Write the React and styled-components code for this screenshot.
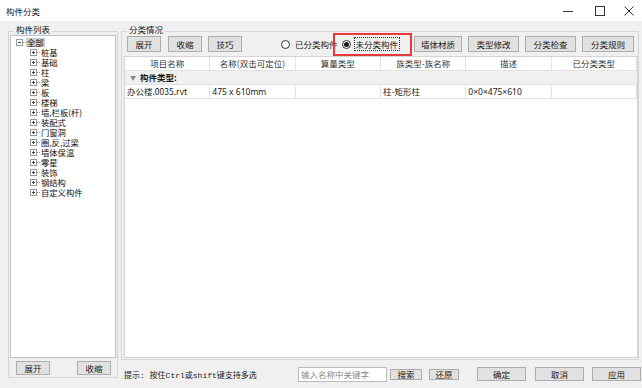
import React from 'react';
import styled, { createGlobalStyle } from 'styled-components';

const Global = createGlobalStyle`
  html, body { margin: 0; padding: 0; background: #f0f0f0; }
  body {
    font-family: "Noto Sans CJK SC", "Noto Sans", sans-serif;
    font-size: 8.5px;
    color: #1a1a1a;
  }
  * { box-sizing: border-box; }
`;

const Window = styled.div`
  width: 642px;
  height: 388px;
  display: flex;
  flex-direction: column;
  background: #f0f0f0;
  overflow: hidden;
`;

const TitleBar = styled.div`
  height: 21px;
  flex-shrink: 0;
  background: #fff;
  display: flex;
  align-items: center;
  padding-left: 6px;
`;

const Title = styled.span`
  flex: 1;
  font-size: 8.5px;
  color: #1a1a1a;
`;

const WinBtn = styled.div`
  width: ${p => p.$w}px;
  height: 21px;
  display: flex;
  align-items: center;
  justify-content: center;
`;

const Body = styled.div`
  flex: 1;
  display: flex;
  padding: 4px 0 0 8px;
  gap: 3px;
`;

const Group = styled.fieldset`
  margin: 0;
  padding: 0 1px;
  width: ${p => p.$w}px;
  height: ${p => p.$h}px;
  border: 1px solid #d6d6d6;
  display: flex;
  flex-direction: column;
  min-width: 0;
`;

const Legend = styled.legend`
  font-size: 8.5px;
  line-height: 8px;
  padding: 0 2px 4px;
  margin-left: ${p => p.$ml}px;
  color: #1a1a1a;
`;

const Tree = styled.div`
  margin-top: -2px;
  height: 323px;
  background: #fff;
  border: 1px solid #c4c4c4;
  padding-top: 1px;
  display: flex;
  flex-direction: column;
`;

const TreeRow = styled.div`
  height: 10px;
  display: flex;
  align-items: center;
  padding-left: ${p => p.$level * 14 + 5}px;
  font-size: 8.3px;
  line-height: 10px;
  color: #111;
  white-space: nowrap;
`;

const TreeLabel = styled.span`
  padding: 0 1px;
  line-height: 9px;
  background: ${p => (p.$selected ? '#cccccc' : 'transparent')};
`;

const LeftButtons = styled.div`
  margin-top: 3px;
  height: 14px;
  display: flex;
  justify-content: space-between;
  padding: 0 5px 0 6px;
`;

const Btn = styled.button`
  margin: 0 0 0 ${p => p.$ml || 0}px;
  padding: 0;
  width: ${p => p.$w}px;
  height: ${p => p.$h}px;
  flex-shrink: 0;
  border: 1px solid #adadad;
  background: #e1e1e1;
  font-family: inherit;
  font-size: 8.5px;
  line-height: 1;
  color: #1a1a1a;
  display: flex;
  align-items: center;
  justify-content: center;
`;

const RightColumn = styled.div`
  width: 521px;
  display: flex;
  flex-direction: column;
`;

const Toolbar = styled.div`
  position: relative;
  margin-top: -1px;
  height: 16px;
  display: flex;
  align-items: center;
  padding-left: 4px;
`;

const RadioLabel = styled.label`
  display: flex;
  align-items: center;
  gap: 3px;
  margin-left: ${p => p.$ml}px;
  white-space: nowrap;
`;

const RadioDot = styled.span`
  width: 9px;
  height: 9px;
  border: 1px solid #333;
  border-radius: 50%;
  background: #fff;
  display: flex;
  align-items: center;
  justify-content: center;
  &::after {
    content: '';
    width: 5px;
    height: 5px;
    border-radius: 50%;
    background: ${p => (p.$on ? '#1a1a1a' : 'transparent')};
  }
`;

const RadioText = styled.span`
  padding: 0 1px;
  line-height: 12px;
  border: 1px dotted ${p => (p.$focus ? '#333' : 'transparent')};
`;

const RedMark = styled.div`
  position: absolute;
  left: 210px;
  top: -3px;
  width: 79px;
  height: 23px;
  border: 2px solid #e8383d;
  pointer-events: none;
`;

const Table = styled.div`
  margin: 4px 0 0 1px;
  width: 514px;
  height: 302px;
  background: #fff;
  border: 1px solid #d4d4d4;
  display: flex;
  flex-direction: column;
`;

const Row = styled.div`
  height: 14px;
  display: grid;
  grid-template-columns: repeat(6, 1fr);
  border-bottom: 1px solid #e3e3e3;
  background: #fff;
`;

const Cell = styled.div`
  border-right: 1px solid #e3e3e3;
  line-height: 13px;
  padding: 0 ${p => (p.$center ? 0 : 2)}px;
  text-align: ${p => (p.$center ? 'center' : 'left')};
  white-space: nowrap;
  overflow: hidden;
  color: ${p => (p.$center ? '#333' : '#1a1a1a')};
  font-family: ${p => (p.$latin ? '"Noto Sans", "Noto Sans CJK SC", sans-serif' : 'inherit')};
`;

const GroupRow = styled.div`
  height: 14px;
  display: flex;
  align-items: center;
  gap: 4px;
  padding-left: 5px;
  background: #f0f0f0;
  border-bottom: 1px solid #e3e3e3;
  font-weight: bold;
  line-height: 13px;
`;

const Caret = styled.span`
  font-size: 6px;
  color: #888;
  font-weight: normal;
`;

const BottomBar = styled.div`
  height: 28px;
  display: flex;
  align-items: center;
  padding-left: 3px;
`;

const Hint = styled.span`
  width: 174px;
  flex-shrink: 0;
  font-family: "Liberation Mono", "Noto Sans CJK SC", monospace;
  font-size: 8px;
  white-space: nowrap;
  color: #1a1a1a;
`;

const SearchInput = styled.input`
  width: 89px;
  height: 15px;
  margin: 0;
  padding: 0 2px;
  border: 1px solid #bcbcbc;
  background: #fff;
  font-family: inherit;
  font-size: 8.5px;
  color: #1a1a1a;
  &::placeholder { color: #8a8a8a; }
`;

function Expander({ open }) {
  return (
    <svg width="10" height="9" viewBox="0 0 10 9" style={{ flexShrink: 0 }}>
      <rect x="0.5" y="1.5" width="6" height="6" fill="#fff" stroke="#9a9a9a" />
      <line x1="2" y1="4.5" x2="5" y2="4.5" stroke="#444" />
      {!open && <line x1="3.5" y1="3" x2="3.5" y2="6" stroke="#444" />}
      <line x1="7" y1="4.5" x2="10" y2="4.5" stroke="#9a9a9a" strokeDasharray="1 1" />
    </svg>
  );
}

const treeItems = ['桩基', '基础', '柱', '梁', '板', '楼梯', '墙,栏板(杆)', '装配式', '门窗洞', '圈,反,过梁', '墙体保温', '零星', '装饰', '钢结构', '自定义构件'];

const headers = ['项目名称', '名称(双击可定位)', '算量类型', '族类型-族名称', '描述', '已分类类型'];
const dataRow = ['办公楼.0035.rvt', '475 x 610mm', '', '柱-矩形柱', '0×0×475×610', ''];

export default function App() {
  return (
    <Window>
      <Global />
      <TitleBar>
        <Title>构件分类</Title>
        <WinBtn $w={32}>
          <svg width="10" height="10" viewBox="0 0 10 10"><line x1="0" y1="5.5" x2="10" y2="5.5" stroke="#333" /></svg>
        </WinBtn>
        <WinBtn $w={32}>
          <svg width="10" height="10" viewBox="0 0 10 10"><rect x="0.5" y="0.5" width="9" height="9" fill="none" stroke="#333" /></svg>
        </WinBtn>
        <WinBtn $w={26}>
          <svg width="10" height="10" viewBox="0 0 10 10"><path d="M0.5 0.5 L9.5 9.5 M9.5 0.5 L0.5 9.5" stroke="#333" /></svg>
        </WinBtn>
      </TitleBar>
      <Body>
        <Group $w={110} $h={353}>
          <Legend $ml={4}>构件列表</Legend>
          <Tree>
            <TreeRow $level={0}>
              <Expander open />
              <TreeLabel $selected>全部</TreeLabel>
            </TreeRow>
            {treeItems.map(t => (
              <TreeRow key={t} $level={1}>
                <Expander />
                <TreeLabel>{t}</TreeLabel>
              </TreeRow>
            ))}
          </Tree>
          <LeftButtons>
            <Btn $w={34} $h={14}>展开</Btn>
            <Btn $w={34} $h={14}>收缩</Btn>
          </LeftButtons>
        </Group>
        <RightColumn>
          <Group $w={518} $h={335}>
            <Legend $ml={4}>分类情况</Legend>
            <Toolbar>
              <Btn $w={34} $h={16}>展开</Btn>
              <Btn $w={34} $h={16} $ml={7}>收缩</Btn>
              <Btn $w={34} $h={16} $ml={6}>技巧</Btn>
              <RadioLabel $ml={39}>
                <RadioDot />
                <RadioText>已分类构件</RadioText>
              </RadioLabel>
              <RadioLabel $ml={2}>
                <RadioDot $on />
                <RadioText $focus>未分类构件</RadioText>
              </RadioLabel>
              <Btn $w={48} $h={16} $ml={14}>墙体材质</Btn>
              <Btn $w={51} $h={16} $ml={6}>类型修改</Btn>
              <Btn $w={51} $h={16} $ml={6}>分类检查</Btn>
              <Btn $w={52} $h={16} $ml={6}>分类规则</Btn>
              <RedMark />
            </Toolbar>
            <Table>
              <Row>
                {headers.map(h => <Cell key={h} $center>{h}</Cell>)}
              </Row>
              <GroupRow>
                <Caret>▼</Caret>
                <span>构件类型:</span>
              </GroupRow>
              <Row>
                {dataRow.map((d, i) => <Cell key={i} $latin={i === 1 || i === 4}>{d}</Cell>)}
              </Row>
            </Table>
          </Group>
          <BottomBar>
            <Hint>提示: 按住Ctrl或shift键支持多选</Hint>
            <SearchInput placeholder="输入名称中关键字" />
            <Btn $w={32} $h={11} $ml={3}>搜索</Btn>
            <Btn $w={30} $h={11} $ml={7}>还原</Btn>
            <Btn $w={49} $h={14} $ml={18}>确定</Btn>
            <Btn $w={49} $h={14} $ml={9}>取消</Btn>
            <Btn $w={49} $h={14} $ml={8}>应用</Btn>
          </BottomBar>
        </RightColumn>
      </Body>
    </Window>
  );
}
